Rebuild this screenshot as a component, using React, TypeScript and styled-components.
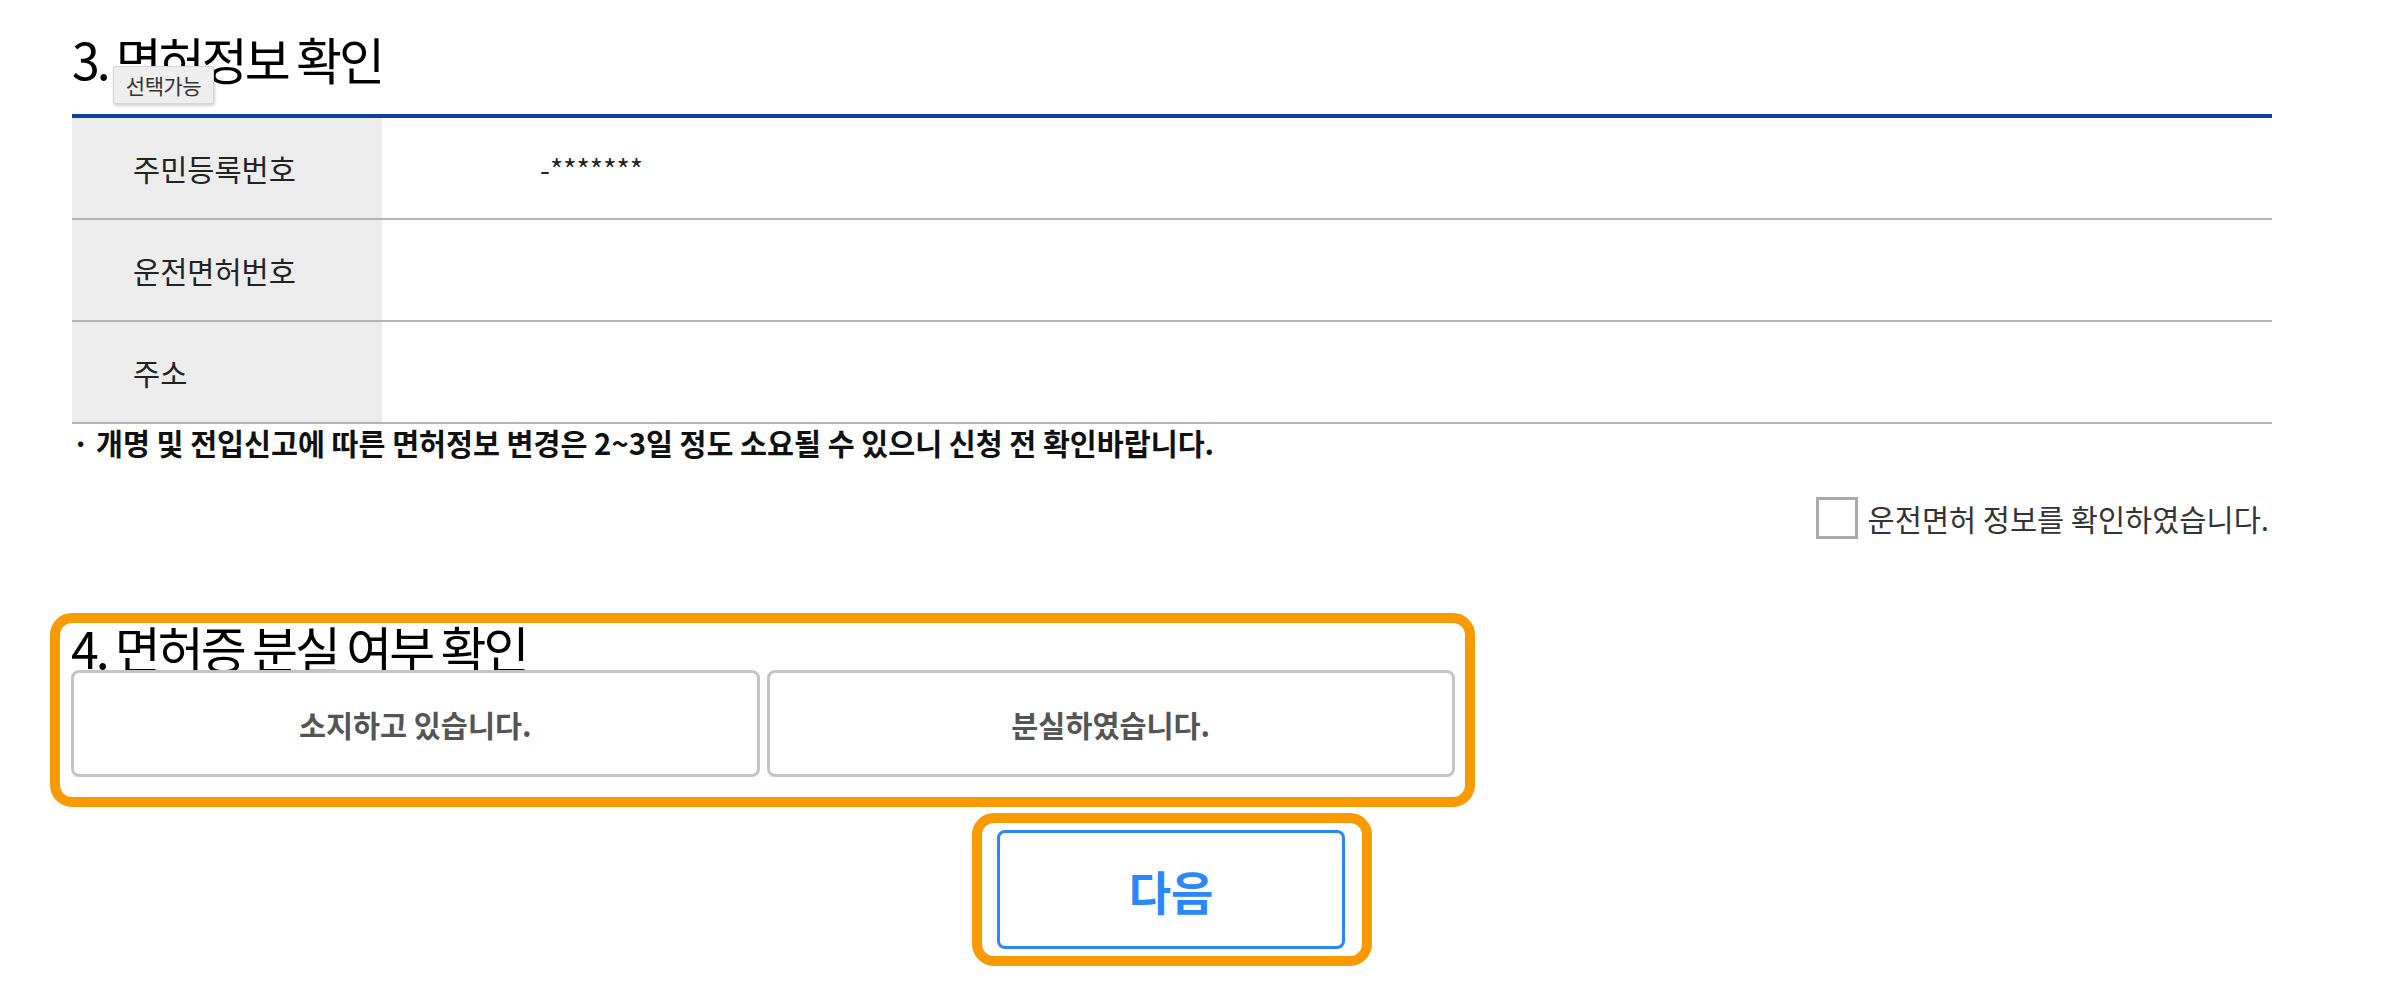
import React from 'react'
import styled, { createGlobalStyle } from 'styled-components'

const GlobalStyle = createGlobalStyle`
  html, body {
    margin: 0;
    padding: 0;
    background: #fff;
  }
  body {
    font-family: "Noto Sans CJK KR", "Noto Sans", sans-serif;
    color: #222;
  }
  * {
    box-sizing: border-box;
  }
`

const rows = [
  { label: '주민등록번호', value: '-*******' },
  { label: '운전면허번호', value: '' },
  { label: '주소', value: '' },
]

const App = () => (
  <>
    <GlobalStyle />
    <Page>
      <Title>3. 면허정보 확인</Title>
      <Tooltip>선택가능</Tooltip>

      <InfoTable>
        {rows.map(row => (
          <InfoRow key={row.label}>
            <Label>{row.label}</Label>
            <Value>{row.value}</Value>
          </InfoRow>
        ))}
      </InfoTable>

      <Note>· 개명 및 전입신고에 따른 면허정보 변경은 2~3일 정도 소요될 수 있으니 신청 전 확인바랍니다.</Note>

      <CheckRow>
        <CheckBox />
        <CheckText>운전면허 정보를 확인하였습니다.</CheckText>
      </CheckRow>

      <Highlight>
        <Title $compact>4. 면허증 분실 여부 확인</Title>
        <Choices>
          <Choice>소지하고 있습니다.</Choice>
          <Choice>분실하였습니다.</Choice>
        </Choices>
      </Highlight>

      <NextHighlight>
        <NextButton>다음</NextButton>
      </NextHighlight>
    </Page>
  </>
)

const Page = styled.div`
  position: relative;
  width: 2200px;
  margin-left: 72px;
  padding-top: 32px;
  padding-bottom: 40px;
`

const Title = styled.h2<{ $compact?: boolean }>`
  margin: 0;
  font-size: 50px;
  font-weight: 400;
  letter-spacing: -3px;
  color: #000;
  line-height: ${props => (props.$compact ? '49px' : '53px')};
  height: ${props => (props.$compact ? '47px' : '53px')};
  margin-bottom: ${props => (props.$compact ? '0' : '29px')};
  white-space: nowrap;
`

const Tooltip = styled.div`
  position: absolute;
  left: 41px;
  top: 66px;
  width: 101px;
  height: 38px;
  display: flex;
  align-items: center;
  justify-content: center;
  background: #eeeeee;
  border: 1px solid #d4d4d4;
  border-radius: 2px;
  box-shadow: 1px 2px 3px rgba(0, 0, 0, 0.18);
  font-size: 21px;
  color: #333;
  letter-spacing: -0.5px;
`

const InfoTable = styled.div`
  border-top: 4px solid #0d40a6;
`

const InfoRow = styled.div`
  display: grid;
  grid-template-columns: 310px 1fr;
  height: 102px;
  border-bottom: 2px solid #b4b4b4;
`

const Label = styled.div`
  display: flex;
  align-items: center;
  padding-left: 61px;
  background: #ececec;
  font-size: 29.5px;
  color: #222;
`

const Value = styled.div`
  display: flex;
  align-items: center;
  padding-left: 158px;
  font-size: 28.5px;
  color: #222;
`

const Note = styled.p`
  margin: 1px 0 0;
  font-size: 29.3px;
  line-height: 35px;
  font-weight: 700;
  color: #111;
`

const CheckRow = styled.div`
  display: flex;
  justify-content: flex-end;
  align-items: center;
  gap: 10px;
  height: 42px;
  margin-top: 37px;
  padding-right: 3px;
`

const CheckBox = styled.span`
  width: 42px;
  height: 42px;
  border: 3px solid #aaaaaa;
  background: #fff;
`

const CheckText = styled.span`
  font-size: 29.5px;
  color: #333;
`

const Highlight = styled.section`
  width: 1425px;
  margin: 74px 0 0 -22px;
  border: 10px solid #f99a00;
  border-radius: 22px;
  padding: 0 10px 20px 11px;
`

const Choices = styled.div`
  position: relative;
  display: flex;
  gap: 7px;
`

const Choice = styled.button`
  flex: 1;
  height: 107px;
  border: 3px solid #c4c4c4;
  border-radius: 8px;
  background: #fff;
  font-family: inherit;
  font-size: 29.4px;
  font-weight: 700;
  color: #555;
  cursor: pointer;
`

const NextHighlight = styled.div`
  width: 400px;
  height: 153px;
  margin: 6px auto 0;
  border: 10px solid #f99a00;
  border-radius: 22px;
  padding: 7px 17px 7px 15px;
`

const NextButton = styled.button`
  width: 100%;
  height: 119px;
  border: 3px solid #2b87f7;
  border-radius: 8px;
  background: #fff;
  font-family: inherit;
  font-size: 46px;
  font-weight: 700;
  color: #2b87f7;
  cursor: pointer;
`

export default App
